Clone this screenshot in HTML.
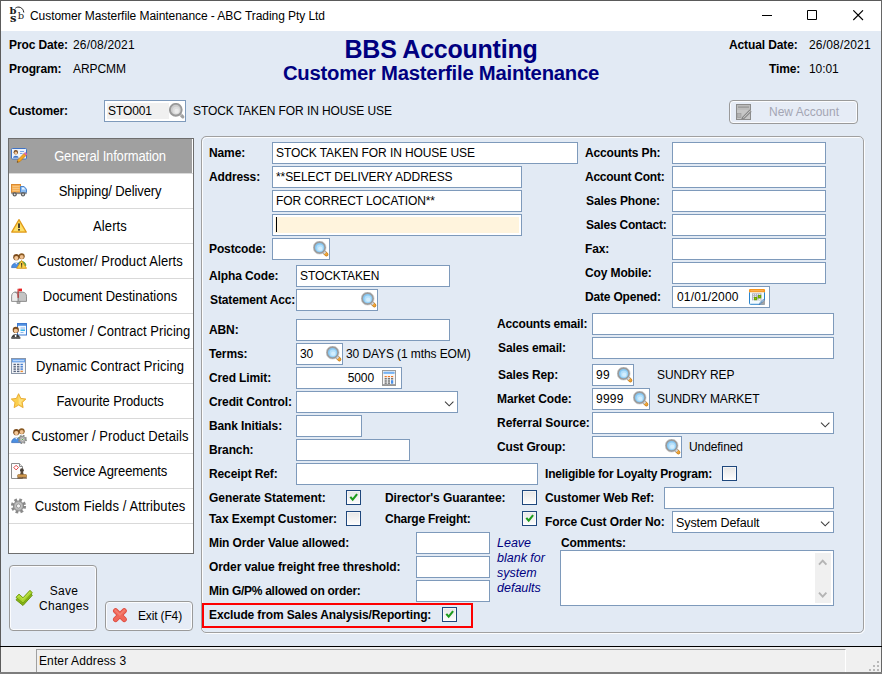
<!DOCTYPE html>
<html><head><meta charset="utf-8"><title>Customer Masterfile Maintenance</title>
<style>
*{box-sizing:border-box;margin:0;padding:0}
html,body{width:882px;height:674px;overflow:hidden;background:#e2eaf4}
body{position:relative;font-family:"Liberation Sans",Arial,sans-serif;font-size:12px;color:#000}
.a{position:absolute;white-space:nowrap}
.b{font-weight:bold}
.l{position:absolute;white-space:nowrap;font-weight:bold;height:16px;line-height:16px;letter-spacing:-0.12px}
.t{position:absolute;white-space:nowrap;height:16px;line-height:16px;letter-spacing:-0.09px}
.i{position:absolute;background:#fff;border:1px solid #7e9abb;height:22px;line-height:20px;padding-left:3px;white-space:nowrap;overflow:hidden;letter-spacing:-0.09px}
.cb{position:absolute;width:15px;height:15px;border:1px solid #1e477c;background:linear-gradient(#e6e6e6,#fdfdfd);box-shadow:inset 0 0 0 1px rgba(255,255,255,.55)}
.nav{position:absolute;left:8px;top:138px;width:186px;height:416px;border:1px solid #6e6e6e;background:#fff}
.ni{position:absolute;left:0;width:184px;height:35px;border-bottom:1px solid #d9d9d9;font-size:13px;line-height:35px;text-align:center;padding-left:18px;white-space:nowrap}
.ni svg{position:absolute;left:2px;top:9px}
.ni span{display:inline-block;line-height:15px;transform:scaleY(1.06);transform-origin:50% 12px}
.btn{position:absolute;border:1px solid #9a9a9a;border-radius:4px;background:#e6ecf6;box-shadow:inset 0 0 0 1px #fbfcfe;font-size:14px}
svg{display:block}
.ic{position:absolute}
</style></head><body>
<!-- window frame -->
<div class="a" style="left:0;top:0;width:882px;height:31px;background:#fff"></div>
<div class="a" style="left:0;top:0;width:882px;height:1px;background:#5a5a5a"></div>
<div class="a" style="left:0;top:0;width:1px;height:674px;background:#5c5c5c"></div>
<div class="a" style="left:881px;top:0;width:1px;height:674px;background:#666"></div>
<div class="a" style="left:0;top:646px;width:882px;height:1px;background:#000"></div>
<div class="a" style="left:1px;top:647px;width:880px;height:25px;background:#f0f0f0"></div>
<div class="a" style="left:0;top:672px;width:882px;height:2px;background:#7d7d7d"></div>
<!-- title bar -->
<div class="a" id="logo" style="left:9px;top:4px;width:18px;height:22px;font-family:'DejaVu Serif',serif;font-weight:bold;color:#1c1c1c">
<span class="a" style="left:0.500px;top:1.400px;font-size:10px;line-height:12px">b</span><span class="a" style="left:8.800px;top:5.500px;font-size:10px;line-height:12px;font-weight:normal">b</span><span class="a" style="left:1px;top:8px;font-size:11.5px;line-height:12px">s</span>
<svg class="ic" style="left:0;top:0" width="18" height="22"><path d="M6.300 4.200C9 1.800 14.300 3.200 14.800 8.500" fill="none" stroke="#1c1c1c" stroke-width="1"/></svg>
</div>
<div class="a" id="title" style="left:30px;top:8px;height:16px;line-height:16px;font-size:12px;letter-spacing:-0.06px">Customer Masterfile Maintenance - ABC Trading Pty Ltd</div>
<svg class="ic" style="left:760px;top:10px" width="110" height="12"><path d="M2 5.500H12" stroke="#000" fill="none"/><path d="M47.500 0.500h9v9h-9z" stroke="#000" fill="none"/><path d="M93.300 0.300l9.700 9.700M103 0.300l-9.700 9.700" stroke="#000" stroke-width="1.100" fill="none"/></svg>
<!-- header -->
<div class="l" style="left:9px;top:37px">Proc Date:</div><div class="t" style="left:73px;top:37px;letter-spacing:.17px">26/08/2021</div>
<div class="l" style="left:9px;top:61px">Program:</div><div class="t" style="left:73px;top:61px">ARPCMM</div>
<div class="a b" id="h1" style="left:241px;top:35px;width:400px;text-align:center;font-size:25px;letter-spacing:-0.24px;line-height:28px;color:#000080">BBS Accounting</div>
<div class="a b" id="h2" style="left:241px;top:60.700px;width:400px;text-align:center;font-size:20.3px;letter-spacing:-0.235px;line-height:24px;color:#000080">Customer Masterfile Maintenance</div>
<div class="l" style="left:729px;top:37px">Actual Date:</div><div class="t" style="left:809px;top:37px;letter-spacing:.17px">26/08/2021</div>
<div class="l" style="left:769px;top:61px">Time:</div><div class="t" style="left:809px;top:61px">10:01</div>
<div class="l" style="left:9px;top:103px">Customer:</div>
<div class="i" style="left:104px;top:100px;width:82px"><div style="position:absolute;left:2px;top:2px;width:62px;height:16px;background:#f0f0f0"></div><span style="position:relative">STO001</span></div>
<svg class="ic" style="left:168.700px;top:102.500px" width="17" height="17" viewBox="0 0 17 17"><path d="M12.300 12.300l1.500 1.500" stroke="#a2a2a2" stroke-width="3.200" stroke-linecap="round"/><path d="M10.800 10.800l1.600 1.600" stroke="#c4c4c4" stroke-width="3"/><circle cx="6.800" cy="6.800" r="5.900" fill="#cdcdcd" stroke="#999" stroke-width="1.900"/><circle cx="7.200" cy="7.400" r="3.600" fill="#dedede"/><circle cx="7.600" cy="8" r="2.200" fill="#ececec"/></svg>
<div class="t" style="left:193px;top:103px">STOCK TAKEN FOR IN HOUSE USE</div>
<div class="btn" style="left:729px;top:100px;width:129px;height:24px;color:#a4a6b4;font-size:12px;line-height:23px;padding-left:39px">New Account</div>
<!-- NAV -->
<div class="nav" id="nav">
<div class="ni" style="top:0px;background:linear-gradient(#a0a0a0,#a0a0a0) 0 0/183px 34px no-repeat #fff;color:#fff"><svg width="16" height="16" viewBox="0 0 16 16"><rect x=".5" y=".5" width="15" height="10.500" rx="1" fill="#edf3fc" stroke="#3f72c4"/><circle cx="4.800" cy="4.300" r="2.200" fill="#7a4a1e"/><circle cx="4.800" cy="5" r="1.500" fill="#f4c89a"/><path d="M2 9.800c0-2.800 5.600-2.800 5.600 0z" fill="#3f72c4"/><path d="M9 3.500h4M9 5.500h2.500" stroke="#7aa6e8"/><path d="M13.100 5.400l2 2-6.300 6.300-2.700.8.700-2.800z" fill="#f5a623" stroke="#b06e14" stroke-width=".6"/><path d="M13.100 5.400l1.100-1.100 2 2-1.100 1.100z" fill="#ea6ab4" stroke="#b84a8a" stroke-width=".4"/><path d="M6.100 14.500l.400-1.400 1 1z" fill="#333"/></svg><span style="letter-spacing:-0.166px">General Information</span></div>
<div class="ni" style="top:35px"><svg width="16" height="16" viewBox="0 0 16 16"><rect x=".5" y="1.500" width="9" height="8" fill="#f6ae52" stroke="#dc8a30"/><path d="M1.500 3.500h7M1.500 5.500h7M1.500 7.500h7" stroke="#f9c98a" stroke-width=".8"/><path d="M9.500 3.500h3.600l2.400 2.800v3.200h-6z" fill="#8cbcf0" stroke="#4a84cc"/><path d="M11 4.600h1.800l1.500 1.900H11z" fill="#eef6ff"/><rect x=".3" y="9.500" width="15.400" height="1.600" fill="#8a8a8a"/><circle cx="3.700" cy="11.400" r="2.100" fill="#5a5a5a"/><circle cx="3.700" cy="11.400" r=".9" fill="#e4e4e4"/><circle cx="12" cy="11.400" r="2.100" fill="#5a5a5a"/><circle cx="12" cy="11.400" r=".9" fill="#e4e4e4"/></svg><span style="letter-spacing:-0.113px">Shipping/ Delivery</span></div>
<div class="ni" style="top:70px"><svg width="16" height="16" viewBox="0 0 16 16"><path d="M8 1.600L15.300 14.100H.700z" fill="#fcd548" stroke="#e09a1c" stroke-width="1.200" stroke-linejoin="round"/><path d="M8 4L13.300 13H2.700z" fill="#fde27a" opacity=".7"/><rect x="7.100" y="5.400" width="1.800" height="4.600" fill="#3a3226"/><rect x="7.100" y="10.900" width="1.800" height="1.700" fill="#3a3226"/></svg><span style="letter-spacing:0.087px">Alerts</span></div>
<div class="ni" style="top:105px"><svg width="16" height="16" viewBox="0 0 16 16"><circle cx="10.700" cy="3.200" r="3" fill="#8a5a22"/><circle cx="10.700" cy="4.100" r="2" fill="#f0c090"/><path d="M6.500 12.500c0-5.400 8.400-5.400 8.400 0z" fill="#6cb24a" stroke="#3f8a26" stroke-width=".7"/><circle cx="5.300" cy="4.200" r="3.100" fill="#7a4a1c"/><circle cx="5.300" cy="5.100" r="2.100" fill="#f4c898"/><path d="M.600 14.600c0-6.200 9.400-6.200 9.400 0z" fill="#4b8fe2" stroke="#2c64b4" stroke-width=".7"/><path d="M4 9.800l1.300 1.600 1.300-1.600z" fill="#eef4fc"/><path d="M10.600 7.400L15.500 15.300H5.700z" fill="#fcd548" stroke="#d8941a" stroke-width=".9" stroke-linejoin="round"/><rect x="10.100" y="10" width="1.100" height="2.800" fill="#3a3226"/><rect x="10.100" y="13.300" width="1.100" height="1.100" fill="#3a3226"/></svg><span style="letter-spacing:0.042px">Customer/ Product Alerts</span></div>
<div class="ni" style="top:140px"><svg width="16" height="16" viewBox="0 0 16 16"><path d="M3.800 4.200h8c2.300 0 3.700 1.800 3.700 4v5.200H7V8.200c0-2.200-1.400-4-3.200-4z" fill="#c4c4c4" stroke="#868686" stroke-width=".9"/><path d="M.600 13.400V8.200c0-2.200 1.400-4 3.200-4S7 6 7 8.200v5.200z" fill="#ededed" stroke="#868686" stroke-width=".9"/><rect x="6.600" y=".8" width="1" height="9" fill="#b81414"/><rect x="7.600" y=".6" width="3.400" height="2.700" fill="#ea2222"/><rect x="6" y="13.500" width="3" height="2" fill="#b4b4b4" stroke="#808080" stroke-width=".6"/></svg><span style="letter-spacing:-0.005px">Document Destinations</span></div>
<div class="ni" style="top:175px"><svg width="16" height="16" viewBox="0 0 16 16"><rect x="6.500" y=".5" width="9" height="11.500" fill="#f4f9ff" stroke="#3f7ad0"/><rect x="7" y="1" width="8" height="1.800" fill="#4f8fe0"/><path d="M9.500 5h4.500M9.500 9.500h3" stroke="#8ab4e8"/><path d="M9.500 7.200h4.500" stroke="#38b4e8" stroke-width="1.600"/><circle cx="4.800" cy="6.900" r="3.100" fill="#7a4a1c"/><circle cx="4.800" cy="7.800" r="2.100" fill="#f2c596"/><path d="M.400 15.600c0-6 8.600-6 8.600 0z" fill="#3a3a3a"/><path d="M3.700 11l.9 1 .9-1-.3 4.400H4z" fill="#fff"/><rect x=".4" y="14" width="9" height="1.800" fill="#5c5c5c"/></svg><span style="letter-spacing:0.042px">Customer / Contract Pricing</span></div>
<div class="ni" style="top:210px"><svg width="16" height="16" viewBox="0 0 16 16"><rect x=".5" y=".5" width="14" height="15" fill="#f2f4f8" stroke="#8a96a8"/><rect x="1" y="1" width="13" height="3.400" fill="#6aa2ea"/><rect x="2" y="1.900" width="11" height="1.300" fill="#b8d6fa"/><g fill="#56627a"><rect x="2.500" y="5.800" width="2.400" height="1.400"/><rect x="6" y="5.800" width="2.400" height="1.400"/><rect x="2.500" y="8.100" width="2.400" height="1.400"/><rect x="6" y="8.100" width="2.400" height="1.400"/><rect x="2.500" y="10.400" width="2.400" height="1.400"/><rect x="6" y="10.400" width="2.400" height="1.400"/><rect x="2.500" y="12.700" width="2.400" height="1.400"/><rect x="6" y="12.700" width="2.400" height="1.400"/></g><g fill="#3f7ad0"><rect x="9.500" y="5.800" width="2.400" height="1.400"/><rect x="9.500" y="8.100" width="2.400" height="1.400"/><rect x="9.500" y="10.400" width="2.400" height="1.400"/></g><rect x="9.500" y="12.700" width="2.400" height="1.400" fill="#e88a30"/></svg><span style="letter-spacing:0.056px">Dynamic Contract Pricing</span></div>
<div class="ni" style="top:245px"><svg width="16" height="16" viewBox="0 0 16 16"><path d="M7.600.700l2.200 4.700 5.100.600-3.700 3.500.9 5.100-4.500-2.500-4.500 2.500.9-5.100L.300 6l5.100-.600z" fill="#fbcf4e" stroke="#e6a628" stroke-width=".9" stroke-linejoin="round"/><path d="M7.600 2.800l1.500 3.400 3.600.4-2.600 2.400.6 3.600-3.100-1.800z" fill="#fde590" opacity=".75"/></svg><span style="letter-spacing:-0.106px">Favourite Products</span></div>
<div class="ni" style="top:280px"><svg width="16" height="16" viewBox="0 0 16 16"><circle cx="10.700" cy="3.200" r="3" fill="#8a5a22"/><circle cx="10.700" cy="4.100" r="2" fill="#f0c090"/><path d="M6.500 12.500c0-5.400 8.400-5.400 8.400 0z" fill="#6cb24a" stroke="#3f8a26" stroke-width=".7"/><circle cx="5.300" cy="4.200" r="3.100" fill="#7a4a1c"/><circle cx="5.300" cy="5.100" r="2.100" fill="#f4c898"/><path d="M.600 14.600c0-6.200 9.400-6.200 9.400 0z" fill="#4b8fe2" stroke="#2c64b4" stroke-width=".7"/><path d="M4 9.800l1.300 1.600 1.300-1.600z" fill="#eef4fc"/><circle cx="11.400" cy="11.400" r="3.700" fill="none" stroke="#8a8a8a" stroke-width="1.800" stroke-dasharray="1.650 1.256"/><circle cx="11.400" cy="11.400" r="3.100" fill="#bcbcbc" stroke="#7e7e7e" stroke-width=".6"/><circle cx="11.400" cy="11.400" r="1.500" fill="#f4f4f4" stroke="#7e7e7e" stroke-width=".5"/><circle cx="11.400" cy="11.400" r=".7" fill="#5ab04a"/></svg><span style="letter-spacing:0.072px">Customer / Product Details</span></div>
<div class="ni" style="top:315px"><svg width="16" height="16" viewBox="0 0 16 16"><path d="M.500.500h8l3 3v12h-11z" fill="#fcfcfc" stroke="#8c8c8c"/><path d="M8.500.500v3h3" fill="#e6e6e6" stroke="#8c8c8c"/><path d="M2.800 4.600l2.300-2.300 2.300 2.300-2.300 2.300z" fill="#fff" stroke="#e23030" stroke-width=".9"/><circle cx="10.900" cy="7.200" r="1.900" fill="#4a4038"/><path d="M9.900 8.500h2l.9 3.300h-3.800z" fill="#5a4a3a"/><rect x="6.600" y="11.600" width="9" height="2.700" rx=".8" fill="#d29c52" stroke="#8a5a20" stroke-width=".6"/><rect x="6.300" y="14.400" width="9.600" height="1.200" fill="#6a4a2a"/></svg><span style="letter-spacing:-0.108px">Service Agreements</span></div>
<div class="ni" style="top:350px"><svg width="16" height="16" viewBox="0 0 16 16"><circle cx="7.500" cy="8" r="6.100" fill="none" stroke="#8a8a8a" stroke-width="3" stroke-dasharray="2.600 2.191"/><circle cx="7.500" cy="8" r="5.100" fill="#ababab" stroke="#7d7d7d" stroke-width=".8"/><circle cx="7.500" cy="8" r="3.400" fill="#c6c6c6"/><circle cx="7.500" cy="8" r="2.100" fill="#f2f2f2" stroke="#7d7d7d" stroke-width=".7"/></svg><span style="letter-spacing:0.099px">Custom Fields / Attributes</span></div>
</div>
<!-- PANEL -->
<div class="a" style="left:202px;top:137px;width:663px;height:497px;border:1px solid #fcfdfe;border-radius:5px"></div>
<div class="a" style="left:201px;top:136px;width:663px;height:497px;border:1px solid #a0a0a0;border-radius:5px"></div>
<div id="form">
<div class="l" style="left:209px;top:145px">Name:</div>
<div class="i" style="left:272px;top:142px;width:306px">STOCK TAKEN FOR IN HOUSE USE</div>
<div class="l" style="left:209px;top:169px">Address:</div>
<div class="i" style="left:272px;top:166px;width:250px">**SELECT DELIVERY ADDRESS</div>
<div class="i" style="left:272px;top:190px;width:250px">FOR CORRECT LOCATION**</div>
<div class="i" style="left:272px;top:214px;width:250px;padding:0"><div style="position:absolute;left:2px;top:2px;right:2px;bottom:2px;background:#fff4dd"></div><div style="position:absolute;left:3px;top:2px;width:1px;height:15px;background:#000"></div></div>
<div class="l" style="left:209px;top:241px">Postcode:</div>
<div class="i" style="left:272px;top:238px;width:58px"></div>
<svg class="ic" style="left:313px;top:241px" width="17" height="17" viewBox="0 0 17 17"><path d="M12.100 12.100l1.300 1.300" stroke="#c07c1c" stroke-width="3.800" stroke-linecap="round"/><path d="M12.200 12.200l1.100 1.100" stroke="#f2a536" stroke-width="2.700" stroke-linecap="round"/><path d="M10.400 10.400l1.800 1.800" stroke="#9c9c9c" stroke-width="3.400"/><path d="M10.400 10.400l1.800 1.800" stroke="#e2e2e2" stroke-width="2"/><circle cx="6.600" cy="6.600" r="5.600" fill="#86c8f4" stroke="#9a9a9a" stroke-width="1.800"/><circle cx="6.600" cy="6.600" r="6.600" fill="none" stroke="#cecece" stroke-width=".6"/><circle cx="6.900" cy="7.100" r="3.500" fill="#b4dffa"/><circle cx="7.200" cy="7.700" r="2.100" fill="#d2edfd"/></svg>
<div class="l" style="left:209px;top:268px">Alpha Code:</div>
<div class="i" style="left:296px;top:265px;width:154px">STOCKTAKEN</div>
<div class="l" style="left:210px;top:292px">Statement Acc:</div>
<div class="i" style="left:296px;top:289px;width:82px"></div>
<svg class="ic" style="left:361px;top:292px" width="17" height="17" viewBox="0 0 17 17"><path d="M12.100 12.100l1.300 1.300" stroke="#c07c1c" stroke-width="3.800" stroke-linecap="round"/><path d="M12.200 12.200l1.100 1.100" stroke="#f2a536" stroke-width="2.700" stroke-linecap="round"/><path d="M10.400 10.400l1.800 1.800" stroke="#9c9c9c" stroke-width="3.400"/><path d="M10.400 10.400l1.800 1.800" stroke="#e2e2e2" stroke-width="2"/><circle cx="6.600" cy="6.600" r="5.600" fill="#86c8f4" stroke="#9a9a9a" stroke-width="1.800"/><circle cx="6.600" cy="6.600" r="6.600" fill="none" stroke="#cecece" stroke-width=".6"/><circle cx="6.900" cy="7.100" r="3.500" fill="#b4dffa"/><circle cx="7.200" cy="7.700" r="2.100" fill="#d2edfd"/></svg>
<div class="l" style="left:209px;top:322px">ABN:</div>
<div class="i" style="left:296px;top:319px;width:154px"></div>
<div class="l" style="left:209px;top:346px">Terms:</div>
<div class="i" style="left:296px;top:343px;width:47px">30</div>
<svg class="ic" style="left:326px;top:346px" width="17" height="17" viewBox="0 0 17 17"><path d="M12.100 12.100l1.300 1.300" stroke="#c07c1c" stroke-width="3.800" stroke-linecap="round"/><path d="M12.200 12.200l1.100 1.100" stroke="#f2a536" stroke-width="2.700" stroke-linecap="round"/><path d="M10.400 10.400l1.800 1.800" stroke="#9c9c9c" stroke-width="3.400"/><path d="M10.400 10.400l1.800 1.800" stroke="#e2e2e2" stroke-width="2"/><circle cx="6.600" cy="6.600" r="5.600" fill="#86c8f4" stroke="#9a9a9a" stroke-width="1.800"/><circle cx="6.600" cy="6.600" r="6.600" fill="none" stroke="#cecece" stroke-width=".6"/><circle cx="6.900" cy="7.100" r="3.500" fill="#b4dffa"/><circle cx="7.200" cy="7.700" r="2.100" fill="#d2edfd"/></svg>
<div class="t" style="left:346px;top:346px">30 DAYS (1 mths EOM)</div>
<div class="l" style="left:209px;top:370px">Cred Limit:</div>
<div class="i" style="left:296px;top:367px;width:106px;text-align:right;padding-right:27px">5000</div>
<svg class="ic" style="left:382px;top:370px" width="14" height="16" viewBox="0 0 14 16"><rect x=".5" y=".5" width="13" height="15" fill="#f6f6f6" stroke="#9c9c9c"/><rect x="1.500" y="1.600" width="11" height="2.400" fill="#8cc0f6"/><rect x="1.500" y="2.400" width="11" height=".8" fill="#6aa8ee"/><g fill="#f07a28"><rect x="2.600" y="6" width="2.200" height="1.200"/><rect x="5.800" y="6" width="2.200" height="1.200"/><rect x="9" y="6" width="2.200" height="1.200"/></g><g fill="#555"><rect x="2.600" y="8.200" width="2.200" height="1.200"/><rect x="5.800" y="8.200" width="2.200" height="1.200"/><rect x="9" y="8.200" width="2.200" height="1.200"/><rect x="2.600" y="10.400" width="2.200" height="1.200"/><rect x="5.800" y="10.400" width="2.200" height="1.200"/><rect x="2.600" y="12.500" width="2.200" height="1.200"/><rect x="5.800" y="12.500" width="2.200" height="1.200"/></g><rect x="9" y="10.200" width="2.200" height="3.500" fill="#4a90e8"/><rect x=".5" y="14.200" width="13" height="1.300" fill="#8e8e8e"/></svg>
<div class="l" style="left:209px;top:394px">Credit Control:</div>
<div class="i" style="left:296px;top:391px;width:162px"></div>
<svg class="ic" style="left:444px;top:400px" width="11" height="7" viewBox="0 0 11 7"><path d="M1 1.600L5.200 5.800L9.400 1.600" fill="none" stroke="#3c3c3c" stroke-width="1.050"/></svg>
<div class="l" style="left:209px;top:418px">Bank Initials:</div>
<div class="i" style="left:296px;top:415px;width:66px"></div>
<div class="l" style="left:209px;top:442px">Branch:</div>
<div class="i" style="left:296px;top:439px;width:114px"></div>
<div class="l" style="left:209px;top:466px">Receipt Ref:</div>
<div class="i" style="left:296px;top:463px;width:242px"></div>
<div class="l" style="left:209px;top:490px;letter-spacing:-0.036px">Generate Statement:</div>
<div class="cb on" style="left:346px;top:490px"><svg width="13" height="13" viewBox="0 0 13 13"><path d="M3.300 5.800L5.700 8.700L10.100 3.200" fill="none" stroke="#1d9c1d" stroke-width="2.100"/></svg></div>
<div class="l" style="left:209px;top:511px;letter-spacing:-0.091px">Tax Exempt Customer:</div>
<div class="cb" style="left:346px;top:511px"></div>
<div class="l" style="left:385px;top:490px;letter-spacing:-0.087px">Director's Guarantee:</div>
<div class="cb" style="left:522px;top:490px"></div>
<div class="l" style="left:385px;top:511px;letter-spacing:-0.256px">Charge Freight:</div>
<div class="cb on" style="left:522px;top:511px"><svg width="13" height="13" viewBox="0 0 13 13"><path d="M3.300 5.800L5.700 8.700L10.100 3.200" fill="none" stroke="#1d9c1d" stroke-width="2.100"/></svg></div>
<div class="l" style="left:209px;top:535px;letter-spacing:-0.112px">Min Order Value allowed:</div>
<div class="i" style="left:416px;top:532px;width:74px"></div>
<div class="l" style="left:209px;top:559px;letter-spacing:-0.092px">Order value freight free threshold:</div>
<div class="i" style="left:416px;top:556px;width:74px"></div>
<div class="l" style="left:209px;top:583px;letter-spacing:-0.273px">Min G/P% allowed on order:</div>
<div class="i" style="left:416px;top:580px;width:74px"></div>
<div class="a" style="left:497px;top:536px;font-style:italic;color:#000080;font-size:12.5px;line-height:15px;white-space:normal;width:60px">Leave blank for system defaults</div>
<div class="a" style="left:202px;top:603px;width:271px;height:25px;border:2px solid #fd0000"></div>
<div class="l" style="left:209px;top:607px;letter-spacing:-0.125px">Exclude from Sales Analysis/Reporting:</div>
<div class="cb on" style="left:442px;top:607px"><svg width="13" height="13" viewBox="0 0 13 13"><path d="M3.300 5.800L5.700 8.700L10.100 3.200" fill="none" stroke="#1d9c1d" stroke-width="2.100"/></svg></div>
<div class="l" style="left:585px;top:145px;letter-spacing:-0.162px">Accounts Ph:</div>
<div class="i" style="left:672px;top:142px;width:154px"></div>
<div class="l" style="left:585px;top:169px;letter-spacing:-0.251px">Account Cont:</div>
<div class="i" style="left:672px;top:166px;width:154px"></div>
<div class="l" style="left:586px;top:193px">Sales Phone:</div>
<div class="i" style="left:672px;top:190px;width:154px"></div>
<div class="l" style="left:586px;top:217px;letter-spacing:-0.197px">Sales Contact:</div>
<div class="i" style="left:672px;top:214px;width:154px"></div>
<div class="l" style="left:585px;top:241px">Fax:</div>
<div class="i" style="left:672px;top:238px;width:154px"></div>
<div class="l" style="left:585px;top:265px">Coy Mobile:</div>
<div class="i" style="left:672px;top:262px;width:154px"></div>
<div class="l" style="left:585px;top:289px;letter-spacing:-0.185px">Date Opened:</div>
<div class="i" style="left:672px;top:286px;width:98px;letter-spacing:.15px;padding-left:4px">01/01/2000</div>
<svg class="ic" style="left:749px;top:289px" width="16" height="16" viewBox="0 0 16 16"><rect x=".5" y="2.500" width="15" height="12.800" rx=".8" fill="#f2fbff" stroke="#2a84cc"/><path d="M0 3.200V1q0-1 1-1h14q1 0 1 1v2.200z" fill="#f7941d"/><rect x="1.500" y="1.400" width="13" height=".8" fill="#fcc274"/><rect x="3" y="4.300" width="9.500" height="7.700" fill="#b4b4bc"/><g fill="#f2f2fa"><rect x="4" y="5.200" width="1" height="1"/><rect x="6" y="5.200" width="1" height="1"/><rect x="8" y="5.200" width="1" height="1"/><rect x="10" y="5.200" width="1" height="1"/><rect x="4" y="7.200" width="1" height="1"/><rect x="6" y="7.200" width="1" height="1"/><rect x="4" y="9.200" width="1" height="1"/><rect x="10" y="9.700" width="1.500" height="1.300"/><rect x="8.200" y="10.200" width="1.300" height="1.300"/><rect x="4" y="10.800" width="1" height=".8"/></g><rect x="3" y="11.400" width="9.500" height=".7" fill="#f2fbff"/><rect x="5" y="8" width="3.200" height="3.200" fill="#68a600"/><rect x="9" y="6" width="3.200" height="3.200" fill="#68a600"/><rect x="6.200" y="9.200" width=".8" height=".8" fill="#b8e000"/><rect x="10.200" y="7.200" width=".8" height=".8" fill="#b8e000"/><path d="M10.300 15.800L16 10v5.800z" fill="#a4a4a4"/><path d="M10.300 15.600C11.200 12.800 12.800 11 15.800 10.200C14.800 12.200 14 12.800 12.600 13.200C12.200 14.400 11.600 15 10.300 15.600z" fill="#e8f0f8" stroke="#2a68a8" stroke-width=".7"/></svg>
<div class="l" style="left:497px;top:316px;letter-spacing:-0.160px">Accounts email:</div>
<div class="i" style="left:592px;top:313px;width:242px"></div>
<div class="l" style="left:498px;top:340px">Sales email:</div>
<div class="i" style="left:592px;top:337px;width:242px"></div>
<div class="l" style="left:498px;top:367px">Sales Rep:</div>
<div class="i" style="left:592px;top:364px;width:42px;letter-spacing:.3px">99</div>
<svg class="ic" style="left:617px;top:367px" width="17" height="17" viewBox="0 0 17 17"><path d="M12.100 12.100l1.300 1.300" stroke="#c07c1c" stroke-width="3.800" stroke-linecap="round"/><path d="M12.200 12.200l1.100 1.100" stroke="#f2a536" stroke-width="2.700" stroke-linecap="round"/><path d="M10.400 10.400l1.800 1.800" stroke="#9c9c9c" stroke-width="3.400"/><path d="M10.400 10.400l1.800 1.800" stroke="#e2e2e2" stroke-width="2"/><circle cx="6.600" cy="6.600" r="5.600" fill="#86c8f4" stroke="#9a9a9a" stroke-width="1.800"/><circle cx="6.600" cy="6.600" r="6.600" fill="none" stroke="#cecece" stroke-width=".6"/><circle cx="6.900" cy="7.100" r="3.500" fill="#b4dffa"/><circle cx="7.200" cy="7.700" r="2.100" fill="#d2edfd"/></svg>
<div class="t" style="left:657px;top:367px">SUNDRY REP</div>
<div class="l" style="left:497px;top:391px">Market Code:</div>
<div class="i" style="left:592px;top:388px;width:58px;letter-spacing:.25px">9999</div>
<svg class="ic" style="left:633px;top:391px" width="17" height="17" viewBox="0 0 17 17"><path d="M12.100 12.100l1.300 1.300" stroke="#c07c1c" stroke-width="3.800" stroke-linecap="round"/><path d="M12.200 12.200l1.100 1.100" stroke="#f2a536" stroke-width="2.700" stroke-linecap="round"/><path d="M10.400 10.400l1.800 1.800" stroke="#9c9c9c" stroke-width="3.400"/><path d="M10.400 10.400l1.800 1.800" stroke="#e2e2e2" stroke-width="2"/><circle cx="6.600" cy="6.600" r="5.600" fill="#86c8f4" stroke="#9a9a9a" stroke-width="1.800"/><circle cx="6.600" cy="6.600" r="6.600" fill="none" stroke="#cecece" stroke-width=".6"/><circle cx="6.900" cy="7.100" r="3.500" fill="#b4dffa"/><circle cx="7.200" cy="7.700" r="2.100" fill="#d2edfd"/></svg>
<div class="t" style="left:657px;top:391px">SUNDRY MARKET</div>
<div class="l" style="left:497px;top:415px;letter-spacing:-0.036px">Referral Source:</div>
<div class="i" style="left:592px;top:412px;width:242px"></div>
<svg class="ic" style="left:820px;top:421px" width="11" height="7" viewBox="0 0 11 7"><path d="M1 1.600L5.200 5.800L9.400 1.600" fill="none" stroke="#3c3c3c" stroke-width="1.050"/></svg>
<div class="l" style="left:497px;top:439px">Cust Group:</div>
<div class="i" style="left:592px;top:436px;width:90px"></div>
<svg class="ic" style="left:665px;top:439px" width="17" height="17" viewBox="0 0 17 17"><path d="M12.100 12.100l1.300 1.300" stroke="#c07c1c" stroke-width="3.800" stroke-linecap="round"/><path d="M12.200 12.200l1.100 1.100" stroke="#f2a536" stroke-width="2.700" stroke-linecap="round"/><path d="M10.400 10.400l1.800 1.800" stroke="#9c9c9c" stroke-width="3.400"/><path d="M10.400 10.400l1.800 1.800" stroke="#e2e2e2" stroke-width="2"/><circle cx="6.600" cy="6.600" r="5.600" fill="#86c8f4" stroke="#9a9a9a" stroke-width="1.800"/><circle cx="6.600" cy="6.600" r="6.600" fill="none" stroke="#cecece" stroke-width=".6"/><circle cx="6.900" cy="7.100" r="3.500" fill="#b4dffa"/><circle cx="7.200" cy="7.700" r="2.100" fill="#d2edfd"/></svg>
<div class="t" style="left:689px;top:439px">Undefined</div>
<div class="l" style="left:545px;top:466px;letter-spacing:-0.206px">Ineligible for Loyalty Program:</div>
<div class="cb" style="left:722px;top:466px"></div>
<div class="l" style="left:545px;top:490px">Customer Web Ref:</div>
<div class="i" style="left:664px;top:487px;width:170px"></div>
<div class="l" style="left:545px;top:514px">Force Cust Order No:</div>
<div class="i" style="left:672px;top:511px;width:162px;font-size:12.5px;line-height:22px">System Default</div>
<svg class="ic" style="left:820px;top:520px" width="11" height="7" viewBox="0 0 11 7"><path d="M1 1.600L5.200 5.800L9.400 1.600" fill="none" stroke="#3c3c3c" stroke-width="1.050"/></svg>
<div class="l" style="left:561px;top:535px">Comments:</div>
<div class="i" style="left:560px;top:550px;width:274px;height:56px"><div style="position:absolute;right:2px;top:2px;width:16px;height:50px;background:#f0f0f0"></div></div>
<svg class="ic" style="left:818px;top:558px" width="10" height="8" viewBox="0 0 10 8"><path d="M1 6.600L4.700 2.600L8.400 6.600" fill="none" stroke="#b4b4b4" stroke-width="1.900"/></svg>
<svg class="ic" style="left:818px;top:591px" width="10" height="8" viewBox="0 0 10 8"><path d="M1 1.600L4.700 5.600L8.400 1.600" fill="none" stroke="#b4b4b4" stroke-width="1.900"/></svg>
</div>
<!-- buttons -->
<div class="btn" style="left:9px;top:565px;width:88px;height:66px"></div>
<div class="a" style="left:34px;top:584px;width:60px;text-align:center;font-size:12px;line-height:15px;letter-spacing:0.25px">Save<br>Changes</div>
<div class="btn" style="left:105px;top:601px;width:88px;height:30px"></div>
<div class="a" style="left:138px;top:608px;font-size:12px;line-height:16px;letter-spacing:-0.15px">Exit (F4)</div>
<svg class="ic" style="left:15px;top:589px" width="19" height="19" viewBox="0 0 19 19"><path d="M1 10.800L4 7.600L8 11.300L15 3.800L17.300 6.300L8 16.500z" fill="#86b414" stroke="#6c9610" stroke-width="1" stroke-linejoin="round"/><path d="M1 8.300L4 5.100L8 8.800L15 1.300L17.300 3.800L8 14z" fill="#a9d42c" stroke="#76a212" stroke-width="1" stroke-linejoin="round"/><path d="M2.600 8.300L4.100 6.700L8 10.400L15 3" fill="none" stroke="#c4e65a" stroke-width="1" opacity=".8"/></svg>
<svg class="ic" style="left:112px;top:607px" width="16" height="16" viewBox="0 0 16 16"><path d="M3.600 3.800l8.600 8.600M12.200 3.800l-8.600 8.600" stroke="#dc4a3e" stroke-width="5.200" stroke-linecap="round" fill="none"/><path d="M3.600 3.800l8.600 8.600M12.200 3.800l-8.600 8.600" stroke="#f0685a" stroke-width="3.800" stroke-linecap="round" fill="none"/><path d="M3.400 3.300l4.500 4.500 4.500-4.500" stroke="#f58a7a" stroke-width="1.600" stroke-linecap="round" fill="none" opacity=".7"/></svg>
<svg class="ic" style="left:736px;top:104px" width="17" height="16" viewBox="0 0 17 16"><rect x=".5" y=".5" width="14" height="15" fill="#c6c6c6" stroke="#8c8c8c"/><rect x="1" y="1" width="13" height="5" fill="#bcbcbc"/><rect x="2" y="2.400" width="11" height="1.500" fill="#9c9c9c"/><rect x="1.600" y="9.600" width="3.400" height="4" fill="#b2b2b2" stroke="#999" stroke-width=".6"/><path d="M14.600 6.600L7 14.200" stroke="#8a8a8a" stroke-width="3"/><path d="M14.600 6.600L7.400 13.800" stroke="#d6d6d6" stroke-width=".9"/><path d="M5.200 15.300l1-2.400 1.600 1.600z" fill="#7a7a7a"/></svg>
<!-- status -->
<div class="a" style="left:36px;top:649px;width:810px;height:23px;border-left:1px solid #a0a0a0;border-top:1px solid #a0a0a0;border-right:1px solid #fff;font-size:12px;letter-spacing:0.12px;line-height:22px;padding-left:2px">Enter Address 3</div>
<svg class="ic" style="left:868px;top:660px" width="12" height="12" viewBox="0 0 12 12"><g fill="#b8b8b8"><rect x="9" y="1" width="2" height="2"/><rect x="5" y="5" width="2" height="2"/><rect x="9" y="5" width="2" height="2"/><rect x="1" y="9" width="2" height="2"/><rect x="5" y="9" width="2" height="2"/><rect x="9" y="9" width="2" height="2"/></g></svg>
</body></html>
